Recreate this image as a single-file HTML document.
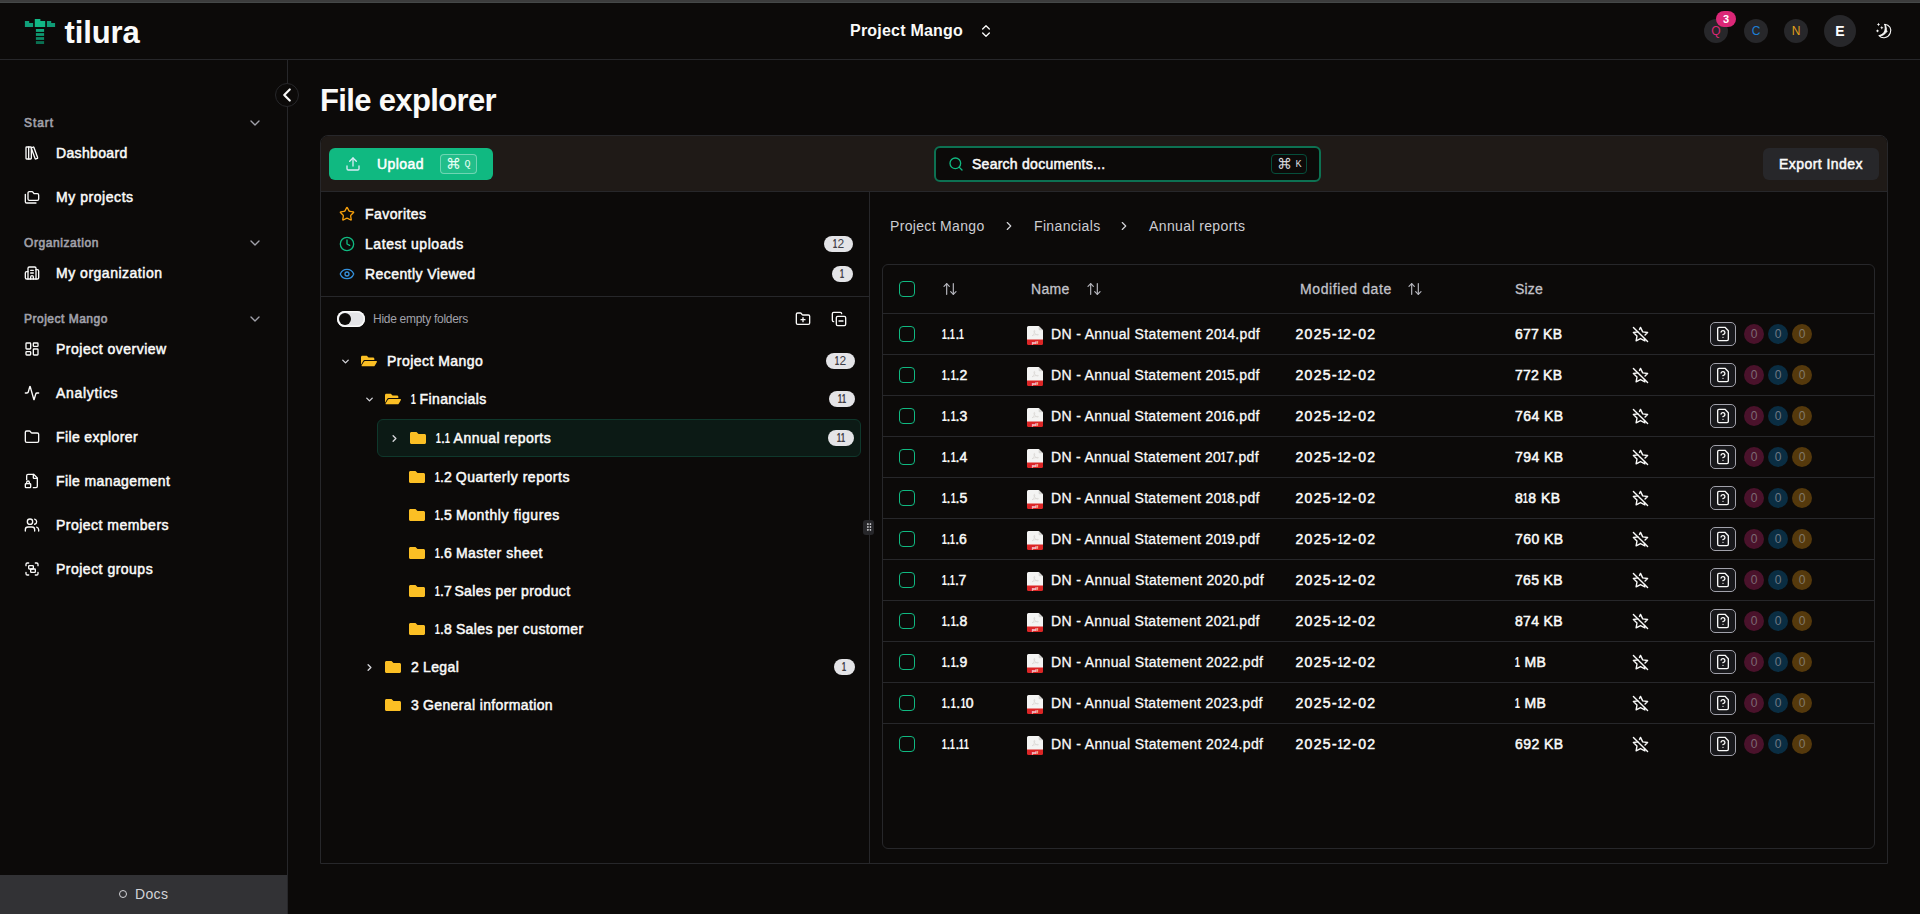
<!DOCTYPE html>
<html lang="en"><head><meta charset="utf-8"><title>File explorer - tilura</title>
<style>
*{box-sizing:border-box;margin:0;padding:0}
html,body{width:1920px;height:914px;overflow:hidden;background:#0c0a09}
body{position:relative;font-family:"Liberation Sans",sans-serif;color:#fafaf9;font-size:14px;line-height:20px;-webkit-font-smoothing:antialiased}
svg{display:block}
.abs{position:absolute}
#topbar{position:absolute;left:0;top:0;width:1920px;height:3px;background:#3c3c3c;border-bottom:1px solid #454848}
#header{position:absolute;left:0;top:3px;width:1920px;height:57px;border-bottom:1px solid #27272a}
#logo{position:absolute;left:24px;top:15px}
#brand{position:absolute;left:64.500px;top:12px;font-size:31px;line-height:36px;font-weight:700;letter-spacing:-0.2px;color:#fafaf9}
#proj{position:absolute;left:850px;top:18px;font-size:16px;line-height:20px;font-weight:700;white-space:nowrap}
#projchev{position:absolute;left:978px;top:20px;color:#fafaf9}
.av{position:absolute;border-radius:50%;background:#27272a;text-align:center;font-size:12px}
#avq{left:1704px;top:16px;width:24px;height:24px;line-height:24px;color:#db2777}
#avc{left:1744px;top:16px;width:24px;height:24px;line-height:24px;color:#1d7fd6}
#avn{left:1784px;top:16px;width:24px;height:24px;line-height:24px;color:#e0a11b}
#ave{left:1824px;top:12px;width:32px;height:32px;line-height:32px;color:#fff;font-weight:700;font-size:14px}
#avbadge{position:absolute;left:1716px;top:8px;width:20px;height:16px;border-radius:8px;background:#db2777;color:#fff;font-size:11px;line-height:16px;font-weight:700;text-align:center}
#moon{position:absolute;left:1868px;top:13px}
#sidebar{position:absolute;left:0;top:60px;width:288px;height:854px;border-right:1px solid #27272a}
#collapse{position:absolute;left:275px;top:83px;width:24px;height:24px;border-radius:50%;border:1px solid #27272a;background:#0c0a09;color:#fafaf9}
#collapse svg{position:absolute;left:0;top:0}
.nlabel{position:absolute;left:24px;font-size:12px;line-height:18px;font-weight:400;-webkit-text-stroke:0.600px;color:#a1a1aa;white-space:nowrap}
.nchev{position:absolute;left:247px;color:#a1a1aa}
.nitem{position:absolute;left:24px;height:20px;white-space:nowrap}
.nic{position:absolute;left:0;top:2px;color:#fafaf9}
.ntx{position:absolute;left:32px;top:0;font-weight:400;-webkit-text-stroke:0.500px;font-size:14px;line-height:20px}
#docs{position:absolute;left:0;top:815px;width:287px;height:39px;background:#323235;color:#d4d4d8;font-size:14px;line-height:39px}
#docs i{position:absolute;left:119px;top:15px;width:8px;height:8px;border:1px solid #d4d4d8;border-radius:50%}
#docs>span{position:absolute;left:135px;top:0}
#title{position:absolute;left:320px;top:83px;font-size:31px;line-height:36px;font-weight:700;letter-spacing:-0.6px;white-space:nowrap}
#panel{position:absolute;left:320px;top:135px;width:1568px;height:729px;border:1px solid #27272a;border-radius:8px 8px 0 0;overflow:hidden}
#toolbar{position:absolute;left:0;top:0;width:1566px;height:56px;background:#1f1a17;border-bottom:1px solid #27272a}
#upload{position:absolute;left:8px;top:12px;width:164px;height:32px;border-radius:6px;background:#10b981;color:#fff}
#upload .ut{-webkit-text-stroke:0.500px}
#upload .ui{position:absolute;left:16px;top:8px;color:#d9ecf6}
#upload .ut{position:absolute;left:48px;top:6px}
.kbd{position:absolute;border-radius:4px;font-family:"Liberation Mono",monospace;font-size:10px;white-space:nowrap}
#upload .kbd{left:111px;top:6px;width:37px;height:20px;border:1px solid rgba(255,255,255,.35);color:#e7fff5;background:rgba(255,255,255,.08)}
#search{position:absolute;left:613px;top:10px;width:387px;height:36px;border:2px solid #0d7152;border-radius:6px;background:#0c0a09}
#search .si{position:absolute;left:12px;top:8px;color:#10b981}
#search .st{position:absolute;left:36px;top:6px;-webkit-text-stroke:0.500px;white-space:nowrap}
#search .kbd{left:335px;top:6px;width:36px;height:20px;border:1px solid #064e3b;color:#d4d4d8}
.kbd .cmd{position:absolute;left:5px;top:0;font-family:"DejaVu Sans",sans-serif;font-size:15px;line-height:18px}
.kbd .key{position:absolute;left:23.500px;top:2px;font-size:10px;line-height:15px}
#export{position:absolute;left:1442px;top:12px;width:116px;height:32px;border-radius:6px;background:#27272a;-webkit-text-stroke:0.500px;text-align:center;line-height:32px;white-space:nowrap}
#left{position:absolute;left:0;top:56px;width:549px;height:672px;border-right:1px solid #27272a}
.frow{position:absolute;left:0;width:548px;height:20px}
.frow .fi{position:absolute;left:18px;top:2px}
.frow .ft{position:absolute;left:44px;top:0;-webkit-text-stroke:0.500px;white-space:nowrap}
.badge{position:absolute;height:16px;border-radius:8px;background:#e4e4e7;color:#3f3f46;font-size:12px;line-height:16px;text-align:center;padding:0;letter-spacing:-0.5px}
#sep1{position:absolute;left:0;top:104px;width:548px;height:1px;background:#27272a}
#toggle{position:absolute;left:16px;top:119px;width:28px;height:16px;border-radius:8px;background:#e4e4e7;box-shadow:inset 0 0 0 1.500px #fafafa}
#toggle i{position:absolute;left:2px;top:2px;width:12px;height:12px;border-radius:50%;background:#0c0a09}
#hidetx{position:absolute;left:52px;top:118px;font-size:12px;line-height:18px;color:#a1a1aa;white-space:nowrap;letter-spacing:-0.45px}
#fplus{position:absolute;left:474px;top:119px;color:#fafaf9}
#cminus{position:absolute;left:510px;top:119px;color:#fafaf9}
#tree{position:absolute;left:0;top:-192px;width:548px}
#tree>span{position:absolute}
.tchev{color:#d4d4d8}
.o{font-style:normal;font-weight:700;text-indent:-.03em;-webkit-text-stroke:0;display:inline-block;width:.364em;transform:scaleX(.66);transform-origin:0 0}
.ttx{-webkit-text-stroke:0.500px;white-space:nowrap;line-height:20px}
.tsel{position:absolute;left:56px;width:484px;height:38px;border:1px solid #0f382c;border-radius:6px;background:#0c1a15}
#grip{position:absolute;left:542px;top:384px;width:11px;height:15px;border-radius:3px;background:#27272a;color:#e4e4e7;z-index:5}
#grip svg{position:absolute;left:0.500px;top:2px}
#right{position:absolute;left:550px;top:56px;width:1016px;height:672px}
#crumbs>span{position:absolute;top:24px;font-size:14px;line-height:20px;color:#cdcdd2;white-space:nowrap}
#crumbs i{position:absolute;top:27px;color:#d4d4d8}
#table{position:absolute;left:11px;top:72px;width:993px;height:585px;border:1px solid #27272a;border-radius:6px;overflow:hidden}
#thead{position:absolute;left:0;top:0;width:991px;height:48px;-webkit-text-stroke:0.300px;color:#c2c2c9}
#thead>span{position:absolute;top:14px;white-space:nowrap}
#thead i{position:absolute;top:16px;color:#b4b4bb}
.cb{position:absolute;left:16px;width:16px;height:16px;border:1.500px solid #10b981;border-radius:4px}
.row{position:absolute;left:0;width:991px;height:41px;border-top:1px solid #27272a}
.row>span{position:absolute;white-space:nowrap}
.row .cb{top:12px}
.c-idx{left:58.500px;top:10px;-webkit-text-stroke:0.500px}
.c-pdf{left:144px;top:12px}
.c-name{left:168px;top:10px;-webkit-text-stroke:0.3px #fafaf9}
.c-date{left:412.500px;top:10px;-webkit-text-stroke:0.500px}
.c-size{left:632px;top:10px;-webkit-text-stroke:0.500px}
.c-star{left:748.500px;top:11.500px;color:#fafaf9}
.c-q{left:827px;top:8px;width:26px;height:24px;border:1px solid #a1a1aa;border-radius:5px;background:#18181b;color:#fafaf9}
.c-q svg{position:absolute;left:4px;top:3px}
.dot{top:10px;width:20px;height:20px;border-radius:50%;font-size:12px;line-height:20px;text-align:center}
.d1{left:861px;background:#4a122b;color:#7d6a73}
.d2{left:885px;background:#0a2d42;color:#6e7882}
.d3{left:909px;background:#55390c;color:#82796a}

</style></head>
<body>
<div id="topbar"></div>
<div id="header">
  <svg id="logo" width="32" height="28" viewBox="0 0 32 28">
    <path d="M.9 2.900h4.300v2.100h3.900v4H.9z" fill="#10a07a"/>
    <path d="M10.800 1.100h5.600v1.800h4.800v6.100H10.800z" fill="#12b886"/>
    <path d="M22.900 2.900h4.300v2.100h3.900v4h-8.200z" fill="#0f9c76"/>
    <rect x="11.900" y="11" width="8.200" height="2.900" fill="#11a87d"/>
    <rect x="11.900" y="15.100" width="8.200" height="2.800" fill="#0f9a72"/>
    <rect x="11.900" y="19.100" width="8.200" height="2.800" fill="#0d8a66"/>
    <rect x="11.900" y="23.100" width="8.200" height="2.900" fill="#0a7052"/>
  </svg>
  <div id="brand"><span style="letter-spacing:-0.09px">tilura</span></div>
  <div id="proj"><span style="letter-spacing:0.22px">Project Mango</span></div>
  <div id="projchev"><svg width="16" height="16" viewBox="0 0 24 24" fill="none" stroke="currentColor" stroke-width="2" stroke-linecap="round" stroke-linejoin="round" ><path d="m7 15 5 5 5-5"/><path d="m7 9 5-5 5 5"/></svg></div>
  <div class="av" id="avq">Q</div><div id="avbadge">3</div>
  <div class="av" id="avc">C</div>
  <div class="av" id="avn">N</div>
  <div class="av" id="ave">E</div>
  <svg id="moon" width="32" height="30" viewBox="0 0 32 30"><path d="M16.700 8.200C21.500 8.700 24.100 13 22.200 17.300 20.300 21.800 14.500 23.300 11 19.600" fill="none" stroke="#fafaf9" stroke-width="1.100" stroke-linecap="round"/><path d="M16.700 8.200C18.300 10.700 18.600 12.600 18.200 14.200L19.300 15.300 18 16.300C16.800 18.600 13.800 20.100 11 19.600 14 19 16.300 17 16.900 14.300 17.400 12 17.200 10 16.700 8.200Z" fill="#fafaf9" stroke="#fafaf9" stroke-width=".9" stroke-linejoin="round"/><path d="M10.500 6.800l.55 1.150 1.150.55-1.150.55-.55 1.150-.55-1.150-1.150-.55 1.150-.55z" fill="#fafaf9"/><path d="M13.800 10l.55 1.150 1.150.55-1.150.55-.55 1.150-.55-1.150-1.150-.55 1.150-.55z" fill="#fafaf9"/><path d="M9.500 13.200l.55 1.150 1.150.55-1.150.55-.55 1.150-.55-1.150-1.150-.55 1.150-.55z" fill="#fafaf9"/></svg>
</div>
<div id="sidebar">
  <div style="position:absolute;left:0;top:-60px">
<div class="nlabel" style="top:114px"><span style="letter-spacing:0.95px">Start</span></div><div class="nchev" style="top:115px"><svg width="16" height="16" viewBox="0 0 24 24" fill="none" stroke="currentColor" stroke-width="2" stroke-linecap="round" stroke-linejoin="round" ><path d="m6 9 6 6 6-6"/></svg></div>
<div class="nitem" style="top:143px"><span class="nic"><svg width="16" height="16" viewBox="0 0 24 24" fill="none" stroke="currentColor" stroke-width="2" stroke-linecap="round" stroke-linejoin="round" ><rect width="8" height="18" x="3" y="3" rx="1"/><path d="M7 3v18"/><path d="M20.4 18.9c.2.5-.1 1.1-.6 1.3l-1.9.7c-.5.2-1.1-.1-1.3-.6L11.1 5.1c-.2-.5.1-1.1.6-1.3l1.9-.7c.5-.2 1.1.1 1.3.6Z"/></svg></span><span class="ntx"><span style="letter-spacing:0.34px">Dashboard</span></span></div>
<div class="nitem" style="top:187px"><span class="nic"><svg width="16" height="16" viewBox="0 0 24 24" fill="none" stroke="currentColor" stroke-width="2" stroke-linecap="round" stroke-linejoin="round" ><path d="M20 17a2 2 0 0 0 2-2V9a2 2 0 0 0-2-2h-3.9a2 2 0 0 1-1.69-.9l-.81-1.2a2 2 0 0 0-1.67-.9H8a2 2 0 0 0-2 2v9a2 2 0 0 0 2 2Z"/><path d="M2 8v11a2 2 0 0 0 2 2h14"/></svg></span><span class="ntx"><span style="letter-spacing:0.55px">My projects</span></span></div>
<div class="nlabel" style="top:234px"><span style="letter-spacing:0.58px">Organization</span></div><div class="nchev" style="top:235px"><svg width="16" height="16" viewBox="0 0 24 24" fill="none" stroke="currentColor" stroke-width="2" stroke-linecap="round" stroke-linejoin="round" ><path d="m6 9 6 6 6-6"/></svg></div>
<div class="nitem" style="top:263px"><span class="nic"><svg width="16" height="16" viewBox="0 0 24 24" fill="none" stroke="currentColor" stroke-width="2" stroke-linecap="round" stroke-linejoin="round" ><path d="M10 12h4"/><path d="M10 8h4"/><path d="M14 21v-3a2 2 0 0 0-4 0v3"/><path d="M6 10H4a2 2 0 0 0-2 2v7a2 2 0 0 0 2 2h16a2 2 0 0 0 2-2V9a2 2 0 0 0-2-2h-2"/><path d="M6 21V5a2 2 0 0 1 2-2h8a2 2 0 0 1 2 2v16"/></svg></span><span class="ntx"><span style="letter-spacing:0.51px">My organization</span></span></div>
<div class="nlabel" style="top:310px"><span style="letter-spacing:0.5px">Project Mango</span></div><div class="nchev" style="top:311px"><svg width="16" height="16" viewBox="0 0 24 24" fill="none" stroke="currentColor" stroke-width="2" stroke-linecap="round" stroke-linejoin="round" ><path d="m6 9 6 6 6-6"/></svg></div>
<div class="nitem" style="top:339px"><span class="nic"><svg width="16" height="16" viewBox="0 0 24 24" fill="none" stroke="currentColor" stroke-width="2" stroke-linecap="round" stroke-linejoin="round" ><rect width="7" height="9" x="3" y="3" rx="1"/><rect width="7" height="5" x="14" y="3" rx="1"/><rect width="7" height="9" x="14" y="12" rx="1"/><rect width="7" height="5" x="3" y="16" rx="1"/></svg></span><span class="ntx"><span style="letter-spacing:0.5px">Project overview</span></span></div>
<div class="nitem" style="top:383px"><span class="nic"><svg width="16" height="16" viewBox="0 0 24 24" fill="none" stroke="currentColor" stroke-width="2" stroke-linecap="round" stroke-linejoin="round" ><path d="M22 12h-2.48a2 2 0 0 0-1.93 1.46l-2.35 8.36a.25.25 0 0 1-.48 0L9.24 2.18a.25.25 0 0 0-.48 0l-2.35 8.36A2 2 0 0 1 4.49 12H2"/></svg></span><span class="ntx"><span style="letter-spacing:0.7px">Analytics</span></span></div>
<div class="nitem" style="top:427px"><span class="nic"><svg width="16" height="16" viewBox="0 0 24 24" fill="none" stroke="currentColor" stroke-width="2" stroke-linecap="round" stroke-linejoin="round" ><path d="M20 20a2 2 0 0 0 2-2V8a2 2 0 0 0-2-2h-7.9a2 2 0 0 1-1.69-.9L9.6 3.9A2 2 0 0 0 7.93 3H4a2 2 0 0 0-2 2v13a2 2 0 0 0 2 2Z"/></svg></span><span class="ntx"><span style="letter-spacing:0.38px">File explorer</span></span></div>
<div class="nitem" style="top:471px"><span class="nic"><svg width="16" height="16" viewBox="0 0 24 24" fill="none" stroke="currentColor" stroke-width="2" stroke-linecap="round" stroke-linejoin="round" ><path d="M4 10V4a2 2 0 0 1 2-2h8.5L20 7.5V20a2 2 0 0 1-2 2h-4"/><path d="M14 2v5a1 1 0 0 0 1 1h5"/><rect width="8" height="6" x="2" y="16" rx="1"/><path d="M8 16v-2a2 2 0 1 0-4 0v2"/></svg></span><span class="ntx"><span style="letter-spacing:0.4px">File management</span></span></div>
<div class="nitem" style="top:515px"><span class="nic"><svg width="16" height="16" viewBox="0 0 24 24" fill="none" stroke="currentColor" stroke-width="2" stroke-linecap="round" stroke-linejoin="round" ><path d="M16 21v-2a4 4 0 0 0-4-4H6a4 4 0 0 0-4 4v2"/><circle cx="9" cy="7" r="4"/><path d="M22 21v-2a4 4 0 0 0-3-3.87"/><path d="M16 3.13a4 4 0 0 1 0 7.75"/></svg></span><span class="ntx"><span style="letter-spacing:0.48px">Project members</span></span></div>
<div class="nitem" style="top:559px"><span class="nic"><svg width="16" height="16" viewBox="0 0 24 24" fill="none" stroke="currentColor" stroke-width="2" stroke-linecap="round" stroke-linejoin="round" ><path d="M3 7V5c0-1.1.9-2 2-2h2"/><path d="M17 3h2c1.100 0 2 .9 2 2v2"/><path d="M21 17v2c0 1.100-.9 2-2 2h-2"/><path d="M7 21H5c-1.100 0-2-.9-2-2v-2"/><rect width="7" height="5" x="7" y="7" rx="1"/><rect width="7" height="5" x="10" y="12" rx="1"/></svg></span><span class="ntx"><span style="letter-spacing:0.49px">Project groups</span></span></div>
  </div>
  <div id="docs"><i></i><span><span style="letter-spacing:0.36px">Docs</span></span></div>
</div>
<div id="collapse"><svg width="22" height="22" viewBox="0 0 24 24" fill="none" stroke="currentColor" stroke-width="2.400" stroke-linecap="round" stroke-linejoin="round" ><path d="m15 18-6-6 6-6"/></svg></div>
<h1 id="title"><span style="letter-spacing:-0.65px">File explorer</span></h1>
<div id="panel">
  <div id="toolbar">
    <div id="upload"><span class="ui"><svg width="16" height="16" viewBox="0 0 24 24" fill="none" stroke="currentColor" stroke-width="2" stroke-linecap="round" stroke-linejoin="round" ><path d="M21 15v4a2 2 0 0 1-2 2H5a2 2 0 0 1-2-2v-4"/><path d="m17 8-5-5-5 5"/><path d="M12 3v12"/></svg></span><span class="ut"><span style="letter-spacing:0.43px">Upload</span></span><span class="kbd"><span class="cmd">&#8984;</span><span class="key">Q</span></span></div>
    <div id="search"><span class="si"><svg width="16" height="16" viewBox="0 0 24 24" fill="none" stroke="currentColor" stroke-width="2" stroke-linecap="round" stroke-linejoin="round" ><circle cx="11" cy="11" r="8"/><path d="m21 21-4.300-4.300"/></svg></span><span class="st"><span style="letter-spacing:0.26px">Search documents...</span></span><span class="kbd"><span class="cmd">&#8984;</span><span class="key">K</span></span></div>
    <div id="export"><span style="letter-spacing:0.45px">Export Index</span></div>
  </div>
  <div id="left">
    <div class="frow" style="top:12px"><span class="fi" style="color:#f59e0b"><svg width="16" height="16" viewBox="0 0 24 24" fill="none" stroke="currentColor" stroke-width="2" stroke-linecap="round" stroke-linejoin="round" ><path d="M11.525 2.295a.53.53 0 0 1 .95 0l2.310 4.679a2.123 2.123 0 0 0 1.595 1.160l5.166.756a.53.53 0 0 1 .294.904l-3.736 3.638a2.123 2.123 0 0 0-.611 1.878l.882 5.140a.53.53 0 0 1-.771.560l-4.618-2.428a2.122 2.122 0 0 0-1.973 0L6.396 21.010a.53.53 0 0 1-.770-.560l.881-5.139a2.122 2.122 0 0 0-.611-1.879L2.160 9.795a.53.53 0 0 1 .294-.906l5.165-.755a2.122 2.122 0 0 0 1.597-1.160z"/></svg></span><span class="ft"><span style="letter-spacing:0.43px">Favorites</span></span></div>
    <div class="frow" style="top:42px"><span class="fi" style="color:#10b981"><svg width="16" height="16" viewBox="0 0 24 24" fill="none" stroke="currentColor" stroke-width="2" stroke-linecap="round" stroke-linejoin="round" ><circle cx="12" cy="12" r="10"/><path d="M12 6v6l4 2"/></svg></span><span class="ft"><span style="letter-spacing:0.56px">Latest uploads</span></span><span class="badge" style="right:16px;top:2px;width:29px"><i class="o">1</i>2</span></div>
    <div class="frow" style="top:72px"><span class="fi" style="color:#3490dc"><svg width="16" height="16" viewBox="0 0 24 24" fill="none" stroke="currentColor" stroke-width="2" stroke-linecap="round" stroke-linejoin="round" ><path d="M2.062 12.348a1 1 0 0 1 0-.696 10.750 10.750 0 0 1 19.876 0 1 1 0 0 1 0 .696 10.750 10.750 0 0 1-19.876 0"/><circle cx="12" cy="12" r="3"/></svg></span><span class="ft"><span style="letter-spacing:0.43px">Recently Viewed</span></span><span class="badge" style="right:16px;top:2px;width:21px"><i class="o">1</i></span></div>
    <div id="sep1"></div>
    <div id="toggle"><i></i></div>
    <div id="hidetx"><span style="letter-spacing:-0.28px">Hide empty folders</span></div>
    <div id="fplus"><svg width="16" height="16" viewBox="0 0 24 24" fill="none" stroke="currentColor" stroke-width="2" stroke-linecap="round" stroke-linejoin="round" ><path d="M12 10v6"/><path d="M9 13h6"/><path d="M20 20a2 2 0 0 0 2-2V8a2 2 0 0 0-2-2h-7.900a2 2 0 0 1-1.690-.9L9.600 3.900A2 2 0 0 0 7.930 3H4a2 2 0 0 0-2 2v13a2 2 0 0 0 2 2Z"/></svg></div>
    <div id="cminus"><svg width="16" height="16" viewBox="0 0 24 24" fill="none" stroke="currentColor" stroke-width="2" stroke-linecap="round" stroke-linejoin="round" ><line x1="12" x2="18" y1="15" y2="15"/><rect width="14" height="14" x="8" y="8" rx="2" ry="2"/><path d="M4 16c-1.100 0-2-.9-2-2V4c0-1.100.9-2 2-2h10c1.100 0 2 .9 2 2"/></svg></div>
    <div id="tree">
<span class="tchev" style="left:18.5px;top:355.5px"><svg width="11" height="11" viewBox="0 0 24 24" fill="none" stroke="currentColor" stroke-width="3" stroke-linecap="round" stroke-linejoin="round" ><path d="m6 9 6 6 6-6"/></svg></span><span class="tfold" style="left:40px;top:353px"><svg class="fold" width="16" height="16" viewBox="0 0 576 512"><path d="M572.694 292.093L500.270 416.248A63.997 63.997 0 0 1 444.989 448H45.025c-18.523 0-30.064-20.093-20.731-36.093l72.424-124.155A64 64 0 0 1 152 256h399.964c18.523 0 30.064 20.093 20.730 36.093zM152 224h328v-48c0-26.510-21.490-48-48-48H272l-64-64H48C21.490 64 0 85.490 0 112v278.046l69.077-118.418C86.214 242.250 117.989 224 152 224z" fill="#fbbf24"/></svg></span><span class="ttx" style="left:66px;top:351px"><span style="letter-spacing:0.47px">Project Mango</span></span><span class="badge" style="right:14px;top:353px;width:29px"><i class="o">1</i>2</span>
<span class="tchev" style="left:42.5px;top:393.5px"><svg width="11" height="11" viewBox="0 0 24 24" fill="none" stroke="currentColor" stroke-width="3" stroke-linecap="round" stroke-linejoin="round" ><path d="m6 9 6 6 6-6"/></svg></span><span class="tfold" style="left:64px;top:391px"><svg class="fold" width="16" height="16" viewBox="0 0 576 512"><path d="M572.694 292.093L500.270 416.248A63.997 63.997 0 0 1 444.989 448H45.025c-18.523 0-30.064-20.093-20.731-36.093l72.424-124.155A64 64 0 0 1 152 256h399.964c18.523 0 30.064 20.093 20.730 36.093zM152 224h328v-48c0-26.510-21.490-48-48-48H272l-64-64H48C21.490 64 0 85.490 0 112v278.046l69.077-118.418C86.214 242.250 117.989 224 152 224z" fill="#fbbf24"/></svg></span><span class="ttx tpre" style="left:90px;top:389px"><i class="o">1</i></span><span class="ttx" style="left:98.5px;top:389px"><span style="letter-spacing:0.41px">Financials</span></span><span class="badge" style="right:14px;top:391px;width:26px"><i class="o">1</i><i class="o">1</i></span>
<div class="tsel" style="top:419px"></div><span class="tchev" style="left:67.5px;top:432.5px"><svg width="11" height="11" viewBox="0 0 24 24" fill="none" stroke="currentColor" stroke-width="3" stroke-linecap="round" stroke-linejoin="round" ><path d="m9 18 6-6-6-6"/></svg></span><span class="tfold" style="left:89px;top:430px"><svg class="fold" width="16" height="16" viewBox="0 0 512 512"><path d="M464 128H272l-64-64H48C21.490 64 0 85.490 0 112v288c0 26.510 21.490 48 48 48h416c26.510 0 48-21.490 48-48V176c0-26.510-21.490-48-48-48z" fill="#fbbf24"/></svg></span><span class="ttx tpre" style="left:115px;top:428px"><i class="o">1</i>.<i class="o">1</i></span><span class="ttx" style="left:132.6px;top:428px"><span style="letter-spacing:0.46px">Annual reports</span></span><span class="badge" style="right:15px;top:430px;width:26px"><i class="o">1</i><i class="o">1</i></span>
<span class="tfold" style="left:88px;top:469px"><svg class="fold" width="16" height="16" viewBox="0 0 512 512"><path d="M464 128H272l-64-64H48C21.490 64 0 85.490 0 112v288c0 26.510 21.490 48 48 48h416c26.510 0 48-21.490 48-48V176c0-26.510-21.490-48-48-48z" fill="#fbbf24"/></svg></span><span class="ttx tpre" style="left:114px;top:467px"><i class="o">1</i>.2</span><span class="ttx" style="left:134.7px;top:467px"><span style="letter-spacing:0.55px">Quarterly reports</span></span>
<span class="tfold" style="left:88px;top:507px"><svg class="fold" width="16" height="16" viewBox="0 0 512 512"><path d="M464 128H272l-64-64H48C21.490 64 0 85.490 0 112v288c0 26.510 21.490 48 48 48h416c26.510 0 48-21.490 48-48V176c0-26.510-21.490-48-48-48z" fill="#fbbf24"/></svg></span><span class="ttx tpre" style="left:114px;top:505px"><i class="o">1</i>.5</span><span class="ttx" style="left:134.9px;top:505px"><span style="letter-spacing:0.61px">Monthly figures</span></span>
<span class="tfold" style="left:88px;top:545px"><svg class="fold" width="16" height="16" viewBox="0 0 512 512"><path d="M464 128H272l-64-64H48C21.490 64 0 85.490 0 112v288c0 26.510 21.490 48 48 48h416c26.510 0 48-21.490 48-48V176c0-26.510-21.490-48-48-48z" fill="#fbbf24"/></svg></span><span class="ttx tpre" style="left:114px;top:543px"><i class="o">1</i>.6</span><span class="ttx" style="left:134.9px;top:543px"><span style="letter-spacing:0.51px">Master sheet</span></span>
<span class="tfold" style="left:88px;top:583px"><svg class="fold" width="16" height="16" viewBox="0 0 512 512"><path d="M464 128H272l-64-64H48C21.490 64 0 85.490 0 112v288c0 26.510 21.490 48 48 48h416c26.510 0 48-21.490 48-48V176c0-26.510-21.490-48-48-48z" fill="#fbbf24"/></svg></span><span class="ttx tpre" style="left:114px;top:581px"><i class="o">1</i>.7</span><span class="ttx" style="left:133.4px;top:581px"><span style="letter-spacing:0.37px">Sales per product</span></span>
<span class="tfold" style="left:88px;top:621px"><svg class="fold" width="16" height="16" viewBox="0 0 512 512"><path d="M464 128H272l-64-64H48C21.490 64 0 85.490 0 112v288c0 26.510 21.490 48 48 48h416c26.510 0 48-21.490 48-48V176c0-26.510-21.490-48-48-48z" fill="#fbbf24"/></svg></span><span class="ttx tpre" style="left:114px;top:619px"><i class="o">1</i>.8</span><span class="ttx" style="left:134.9px;top:619px"><span style="letter-spacing:0.39px">Sales per customer</span></span>
<span class="tchev" style="left:42.5px;top:661.5px"><svg width="11" height="11" viewBox="0 0 24 24" fill="none" stroke="currentColor" stroke-width="3" stroke-linecap="round" stroke-linejoin="round" ><path d="m9 18 6-6-6-6"/></svg></span><span class="tfold" style="left:64px;top:659px"><svg class="fold" width="16" height="16" viewBox="0 0 512 512"><path d="M464 128H272l-64-64H48C21.490 64 0 85.490 0 112v288c0 26.510 21.490 48 48 48h416c26.510 0 48-21.490 48-48V176c0-26.510-21.490-48-48-48z" fill="#fbbf24"/></svg></span><span class="ttx tpre" style="left:90px;top:657px">2</span><span class="ttx" style="left:102.0px;top:657px"><span style="letter-spacing:0.38px">Legal</span></span><span class="badge" style="right:14px;top:659px;width:21px"><i class="o">1</i></span>
<span class="tfold" style="left:64px;top:697px"><svg class="fold" width="16" height="16" viewBox="0 0 512 512"><path d="M464 128H272l-64-64H48C21.490 64 0 85.490 0 112v288c0 26.510 21.490 48 48 48h416c26.510 0 48-21.490 48-48V176c0-26.510-21.490-48-48-48z" fill="#fbbf24"/></svg></span><span class="ttx tpre" style="left:90px;top:695px">3</span><span class="ttx" style="left:102.0px;top:695px"><span style="letter-spacing:0.37px">General information</span></span>
    </div>
  </div>
  <div id="grip"><svg width="10" height="10" viewBox="0 0 24 24" fill="none" stroke="currentColor" stroke-width="2" stroke-linecap="round" stroke-linejoin="round" ><circle cx="9" cy="12" r="1"/><circle cx="9" cy="5" r="1"/><circle cx="9" cy="19" r="1"/><circle cx="15" cy="12" r="1"/><circle cx="15" cy="5" r="1"/><circle cx="15" cy="19" r="1"/></svg></div>
  <div id="right">
    <div id="crumbs">
      <span style="left:19px"><span style="letter-spacing:0.33px">Project Mango</span></span><i style="left:131px"><svg width="14" height="14" viewBox="0 0 24 24" fill="none" stroke="currentColor" stroke-width="2" stroke-linecap="round" stroke-linejoin="round" ><path d="m9 18 6-6-6-6"/></svg></i>
      <span style="left:163px"><span style="letter-spacing:0.35px">Financials</span></span><i style="left:246px"><svg width="14" height="14" viewBox="0 0 24 24" fill="none" stroke="currentColor" stroke-width="2" stroke-linecap="round" stroke-linejoin="round" ><path d="m9 18 6-6-6-6"/></svg></i>
      <span style="left:278px"><span style="letter-spacing:0.38px">Annual reports</span></span>
    </div>
    <div id="table">
      <div id="thead">
        <span class="cb" style="top:16px"></span>
        <i style="left:59px"><svg width="16" height="16" viewBox="0 0 24 24" fill="none" stroke="currentColor" stroke-width="1.800" stroke-linecap="round" stroke-linejoin="round" ><path d="m21 16-4 4-4-4"/><path d="M17 20V4"/><path d="m3 8 4-4 4 4"/><path d="M7 4v16"/></svg></i>
        <span style="left:148px"><span style="letter-spacing:0.32px">Name</span></span><i style="left:203px"><svg width="16" height="16" viewBox="0 0 24 24" fill="none" stroke="currentColor" stroke-width="1.800" stroke-linecap="round" stroke-linejoin="round" ><path d="m21 16-4 4-4-4"/><path d="M17 20V4"/><path d="m3 8 4-4 4 4"/><path d="M7 4v16"/></svg></i>
        <span style="left:417px"><span style="letter-spacing:0.6px">Modified date</span></span><i style="left:524px"><svg width="16" height="16" viewBox="0 0 24 24" fill="none" stroke="currentColor" stroke-width="1.800" stroke-linecap="round" stroke-linejoin="round" ><path d="m21 16-4 4-4-4"/><path d="M17 20V4"/><path d="m3 8 4-4 4 4"/><path d="M7 4v16"/></svg></i>
        <span style="left:632px"><span style="letter-spacing:0.2px">Size</span></span>
      </div>
<div class="row" style="top:48px"><span class="cb"></span><span class="c-idx"><span style="letter-spacing:-0.09px"><i class="o">1</i>.<i class="o">1</i>.<i class="o">1</i></span></span><span class="c-pdf"><svg class="pdf" width="16" height="19" viewBox="0 0 16 19"><path d="M0 1.500 a1.500 1.500 0 0 1 1.500-1.500 h10.200 l4.300 4.300 v9.700 h-16z" fill="#f4f4f3"/><path d="M11.700 0 l4.300 4.300 h-3.500 a.8.8 0 0 1-.8-.8z" fill="#d6d5d3"/><path d="M5.200 9.800 c1.800-1.500 2.600-3.400 2.600-4.800 c0-.8-.9-.8-.9 0 c0 1.800 1.700 3.900 3.900 4.100 c.8.100.8-.700 0-.700 c-1.800 0-4.300.600-5.600 1.400z" fill="none" stroke="#d9d6d2" stroke-width=".7"/><path d="M0 13.500 h16 v4 a1.500 1.500 0 0 1-1.500 1.500 h-13 a1.500 1.500 0 0 1-1.500-1.500z" fill="#dc2626"/><text x="8" y="17.600" text-anchor="middle" font-family="Liberation Sans, sans-serif" font-weight="700" font-size="3.800" fill="#fff">pdf</text></svg></span><span class="c-name"><span style="letter-spacing:0.35px">DN - Annual Statement 20<i class="o">1</i>4.pdf</span></span><span class="c-date"><span style="letter-spacing:1.33px">2025-<i class="o">1</i>2-02</span></span><span class="c-size"><span style="letter-spacing:0.21px">677 KB</span></span><span class="c-star"><svg width="17" height="17" viewBox="0 0 24 24" fill="none" stroke="currentColor" stroke-width="2" stroke-linecap="round" stroke-linejoin="round" ><path d="M8.340 8.340 2 9.270l5 4.870L5.820 21 12 17.770 18.180 21l-.590-3.430"/><path d="M18.420 12.760 22 9.270l-6.910-1L12 2l-1.440 2.910"/><line x1="2" x2="22" y1="2" y2="22"/></svg></span><span class="c-q"><svg width="16" height="16" viewBox="0 0 24 24" fill="none" stroke="currentColor" stroke-width="2" stroke-linecap="round" stroke-linejoin="round" ><path d="M12 17h.01"/><path d="M15 2H6a2 2 0 0 0-2 2v16a2 2 0 0 0 2 2h12a2 2 0 0 0 2-2V7z"/><path d="M9.100 9a3 3 0 0 1 5.820 1c0 2-3 3-3 3"/></svg></span><span class="dot d1">0</span><span class="dot d2">0</span><span class="dot d3">0</span></div>
<div class="row" style="top:89px"><span class="cb"></span><span class="c-idx"><span style="letter-spacing:0.02px"><i class="o">1</i>.<i class="o">1</i>.2</span></span><span class="c-pdf"><svg class="pdf" width="16" height="19" viewBox="0 0 16 19"><path d="M0 1.500 a1.500 1.500 0 0 1 1.500-1.500 h10.200 l4.300 4.300 v9.700 h-16z" fill="#f4f4f3"/><path d="M11.700 0 l4.300 4.300 h-3.500 a.8.8 0 0 1-.8-.8z" fill="#d6d5d3"/><path d="M5.200 9.800 c1.800-1.500 2.600-3.400 2.600-4.800 c0-.8-.9-.8-.9 0 c0 1.800 1.700 3.900 3.900 4.100 c.8.100.8-.700 0-.700 c-1.800 0-4.300.600-5.600 1.400z" fill="none" stroke="#d9d6d2" stroke-width=".7"/><path d="M0 13.500 h16 v4 a1.500 1.500 0 0 1-1.500 1.500 h-13 a1.500 1.500 0 0 1-1.500-1.500z" fill="#dc2626"/><text x="8" y="17.600" text-anchor="middle" font-family="Liberation Sans, sans-serif" font-weight="700" font-size="3.800" fill="#fff">pdf</text></svg></span><span class="c-name"><span style="letter-spacing:0.34px">DN - Annual Statement 20<i class="o">1</i>5.pdf</span></span><span class="c-date"><span style="letter-spacing:1.33px">2025-<i class="o">1</i>2-02</span></span><span class="c-size"><span style="letter-spacing:0.21px">772 KB</span></span><span class="c-star"><svg width="17" height="17" viewBox="0 0 24 24" fill="none" stroke="currentColor" stroke-width="2" stroke-linecap="round" stroke-linejoin="round" ><path d="M8.340 8.340 2 9.270l5 4.870L5.820 21 12 17.770 18.180 21l-.590-3.430"/><path d="M18.420 12.760 22 9.270l-6.910-1L12 2l-1.440 2.910"/><line x1="2" x2="22" y1="2" y2="22"/></svg></span><span class="c-q"><svg width="16" height="16" viewBox="0 0 24 24" fill="none" stroke="currentColor" stroke-width="2" stroke-linecap="round" stroke-linejoin="round" ><path d="M12 17h.01"/><path d="M15 2H6a2 2 0 0 0-2 2v16a2 2 0 0 0 2 2h12a2 2 0 0 0 2-2V7z"/><path d="M9.100 9a3 3 0 0 1 5.820 1c0 2-3 3-3 3"/></svg></span><span class="dot d1">0</span><span class="dot d2">0</span><span class="dot d3">0</span></div>
<div class="row" style="top:130px"><span class="cb"></span><span class="c-idx"><span style="letter-spacing:0.02px"><i class="o">1</i>.<i class="o">1</i>.3</span></span><span class="c-pdf"><svg class="pdf" width="16" height="19" viewBox="0 0 16 19"><path d="M0 1.500 a1.500 1.500 0 0 1 1.500-1.500 h10.200 l4.300 4.300 v9.700 h-16z" fill="#f4f4f3"/><path d="M11.700 0 l4.300 4.300 h-3.500 a.8.8 0 0 1-.8-.8z" fill="#d6d5d3"/><path d="M5.200 9.800 c1.800-1.500 2.600-3.400 2.600-4.800 c0-.8-.9-.8-.9 0 c0 1.800 1.700 3.900 3.900 4.100 c.8.100.8-.700 0-.700 c-1.800 0-4.300.600-5.600 1.400z" fill="none" stroke="#d9d6d2" stroke-width=".7"/><path d="M0 13.500 h16 v4 a1.500 1.500 0 0 1-1.500 1.500 h-13 a1.500 1.500 0 0 1-1.500-1.500z" fill="#dc2626"/><text x="8" y="17.600" text-anchor="middle" font-family="Liberation Sans, sans-serif" font-weight="700" font-size="3.800" fill="#fff">pdf</text></svg></span><span class="c-name"><span style="letter-spacing:0.34px">DN - Annual Statement 20<i class="o">1</i>6.pdf</span></span><span class="c-date"><span style="letter-spacing:1.33px">2025-<i class="o">1</i>2-02</span></span><span class="c-size"><span style="letter-spacing:0.43px">764 KB</span></span><span class="c-star"><svg width="17" height="17" viewBox="0 0 24 24" fill="none" stroke="currentColor" stroke-width="2" stroke-linecap="round" stroke-linejoin="round" ><path d="M8.340 8.340 2 9.270l5 4.870L5.820 21 12 17.770 18.180 21l-.590-3.430"/><path d="M18.420 12.760 22 9.270l-6.910-1L12 2l-1.440 2.910"/><line x1="2" x2="22" y1="2" y2="22"/></svg></span><span class="c-q"><svg width="16" height="16" viewBox="0 0 24 24" fill="none" stroke="currentColor" stroke-width="2" stroke-linecap="round" stroke-linejoin="round" ><path d="M12 17h.01"/><path d="M15 2H6a2 2 0 0 0-2 2v16a2 2 0 0 0 2 2h12a2 2 0 0 0 2-2V7z"/><path d="M9.100 9a3 3 0 0 1 5.820 1c0 2-3 3-3 3"/></svg></span><span class="dot d1">0</span><span class="dot d2">0</span><span class="dot d3">0</span></div>
<div class="row" style="top:171px"><span class="cb"></span><span class="c-idx"><span style="letter-spacing:0.02px"><i class="o">1</i>.<i class="o">1</i>.4</span></span><span class="c-pdf"><svg class="pdf" width="16" height="19" viewBox="0 0 16 19"><path d="M0 1.500 a1.500 1.500 0 0 1 1.500-1.500 h10.200 l4.300 4.300 v9.700 h-16z" fill="#f4f4f3"/><path d="M11.700 0 l4.300 4.300 h-3.500 a.8.8 0 0 1-.8-.8z" fill="#d6d5d3"/><path d="M5.200 9.800 c1.800-1.500 2.600-3.400 2.600-4.800 c0-.8-.9-.8-.9 0 c0 1.800 1.700 3.900 3.900 4.100 c.8.100.8-.700 0-.700 c-1.800 0-4.300.600-5.600 1.400z" fill="none" stroke="#d9d6d2" stroke-width=".7"/><path d="M0 13.500 h16 v4 a1.500 1.500 0 0 1-1.500 1.500 h-13 a1.500 1.500 0 0 1-1.500-1.500z" fill="#dc2626"/><text x="8" y="17.600" text-anchor="middle" font-family="Liberation Sans, sans-serif" font-weight="700" font-size="3.800" fill="#fff">pdf</text></svg></span><span class="c-name"><span style="letter-spacing:0.31px">DN - Annual Statement 20<i class="o">1</i>7.pdf</span></span><span class="c-date"><span style="letter-spacing:1.33px">2025-<i class="o">1</i>2-02</span></span><span class="c-size"><span style="letter-spacing:0.43px">794 KB</span></span><span class="c-star"><svg width="17" height="17" viewBox="0 0 24 24" fill="none" stroke="currentColor" stroke-width="2" stroke-linecap="round" stroke-linejoin="round" ><path d="M8.340 8.340 2 9.270l5 4.870L5.820 21 12 17.770 18.180 21l-.590-3.430"/><path d="M18.420 12.760 22 9.270l-6.910-1L12 2l-1.440 2.910"/><line x1="2" x2="22" y1="2" y2="22"/></svg></span><span class="c-q"><svg width="16" height="16" viewBox="0 0 24 24" fill="none" stroke="currentColor" stroke-width="2" stroke-linecap="round" stroke-linejoin="round" ><path d="M12 17h.01"/><path d="M15 2H6a2 2 0 0 0-2 2v16a2 2 0 0 0 2 2h12a2 2 0 0 0 2-2V7z"/><path d="M9.100 9a3 3 0 0 1 5.820 1c0 2-3 3-3 3"/></svg></span><span class="dot d1">0</span><span class="dot d2">0</span><span class="dot d3">0</span></div>
<div class="row" style="top:212px"><span class="cb"></span><span class="c-idx"><span style="letter-spacing:0.02px"><i class="o">1</i>.<i class="o">1</i>.5</span></span><span class="c-pdf"><svg class="pdf" width="16" height="19" viewBox="0 0 16 19"><path d="M0 1.500 a1.500 1.500 0 0 1 1.500-1.500 h10.200 l4.300 4.300 v9.700 h-16z" fill="#f4f4f3"/><path d="M11.700 0 l4.300 4.300 h-3.500 a.8.8 0 0 1-.8-.8z" fill="#d6d5d3"/><path d="M5.200 9.800 c1.800-1.500 2.600-3.400 2.600-4.800 c0-.8-.9-.8-.9 0 c0 1.800 1.700 3.900 3.900 4.100 c.8.100.8-.700 0-.700 c-1.800 0-4.300.600-5.600 1.400z" fill="none" stroke="#d9d6d2" stroke-width=".7"/><path d="M0 13.500 h16 v4 a1.500 1.500 0 0 1-1.500 1.500 h-13 a1.500 1.500 0 0 1-1.500-1.500z" fill="#dc2626"/><text x="8" y="17.600" text-anchor="middle" font-family="Liberation Sans, sans-serif" font-weight="700" font-size="3.800" fill="#fff">pdf</text></svg></span><span class="c-name"><span style="letter-spacing:0.34px">DN - Annual Statement 20<i class="o">1</i>8.pdf</span></span><span class="c-date"><span style="letter-spacing:1.33px">2025-<i class="o">1</i>2-02</span></span><span class="c-size"><span style="letter-spacing:0.46px">8<i class="o">1</i>8 KB</span></span><span class="c-star"><svg width="17" height="17" viewBox="0 0 24 24" fill="none" stroke="currentColor" stroke-width="2" stroke-linecap="round" stroke-linejoin="round" ><path d="M8.340 8.340 2 9.270l5 4.870L5.820 21 12 17.770 18.180 21l-.590-3.430"/><path d="M18.420 12.760 22 9.270l-6.910-1L12 2l-1.440 2.910"/><line x1="2" x2="22" y1="2" y2="22"/></svg></span><span class="c-q"><svg width="16" height="16" viewBox="0 0 24 24" fill="none" stroke="currentColor" stroke-width="2" stroke-linecap="round" stroke-linejoin="round" ><path d="M12 17h.01"/><path d="M15 2H6a2 2 0 0 0-2 2v16a2 2 0 0 0 2 2h12a2 2 0 0 0 2-2V7z"/><path d="M9.100 9a3 3 0 0 1 5.820 1c0 2-3 3-3 3"/></svg></span><span class="dot d1">0</span><span class="dot d2">0</span><span class="dot d3">0</span></div>
<div class="row" style="top:253px"><span class="cb"></span><span class="c-idx"><span style="letter-spacing:-0.22px"><i class="o">1</i>.<i class="o">1</i>.6</span></span><span class="c-pdf"><svg class="pdf" width="16" height="19" viewBox="0 0 16 19"><path d="M0 1.500 a1.500 1.500 0 0 1 1.500-1.500 h10.200 l4.300 4.300 v9.700 h-16z" fill="#f4f4f3"/><path d="M11.700 0 l4.300 4.300 h-3.500 a.8.8 0 0 1-.8-.8z" fill="#d6d5d3"/><path d="M5.200 9.800 c1.800-1.500 2.600-3.400 2.600-4.800 c0-.8-.9-.8-.9 0 c0 1.800 1.700 3.900 3.900 4.100 c.8.100.8-.700 0-.700 c-1.800 0-4.300.600-5.600 1.400z" fill="none" stroke="#d9d6d2" stroke-width=".7"/><path d="M0 13.500 h16 v4 a1.500 1.500 0 0 1-1.500 1.500 h-13 a1.500 1.500 0 0 1-1.500-1.500z" fill="#dc2626"/><text x="8" y="17.600" text-anchor="middle" font-family="Liberation Sans, sans-serif" font-weight="700" font-size="3.800" fill="#fff">pdf</text></svg></span><span class="c-name"><span style="letter-spacing:0.34px">DN - Annual Statement 20<i class="o">1</i>9.pdf</span></span><span class="c-date"><span style="letter-spacing:1.33px">2025-<i class="o">1</i>2-02</span></span><span class="c-size"><span style="letter-spacing:0.43px">760 KB</span></span><span class="c-star"><svg width="17" height="17" viewBox="0 0 24 24" fill="none" stroke="currentColor" stroke-width="2" stroke-linecap="round" stroke-linejoin="round" ><path d="M8.340 8.340 2 9.270l5 4.870L5.820 21 12 17.770 18.180 21l-.590-3.430"/><path d="M18.420 12.760 22 9.270l-6.910-1L12 2l-1.440 2.910"/><line x1="2" x2="22" y1="2" y2="22"/></svg></span><span class="c-q"><svg width="16" height="16" viewBox="0 0 24 24" fill="none" stroke="currentColor" stroke-width="2" stroke-linecap="round" stroke-linejoin="round" ><path d="M12 17h.01"/><path d="M15 2H6a2 2 0 0 0-2 2v16a2 2 0 0 0 2 2h12a2 2 0 0 0 2-2V7z"/><path d="M9.100 9a3 3 0 0 1 5.820 1c0 2-3 3-3 3"/></svg></span><span class="dot d1">0</span><span class="dot d2">0</span><span class="dot d3">0</span></div>
<div class="row" style="top:294px"><span class="cb"></span><span class="c-idx"><span style="letter-spacing:-0.52px"><i class="o">1</i>.<i class="o">1</i>.7</span></span><span class="c-pdf"><svg class="pdf" width="16" height="19" viewBox="0 0 16 19"><path d="M0 1.500 a1.500 1.500 0 0 1 1.500-1.500 h10.200 l4.300 4.300 v9.700 h-16z" fill="#f4f4f3"/><path d="M11.700 0 l4.300 4.300 h-3.500 a.8.8 0 0 1-.8-.8z" fill="#d6d5d3"/><path d="M5.200 9.800 c1.800-1.500 2.600-3.400 2.600-4.800 c0-.8-.9-.8-.9 0 c0 1.800 1.700 3.900 3.900 4.100 c.8.100.8-.700 0-.700 c-1.800 0-4.300.600-5.600 1.400z" fill="none" stroke="#d9d6d2" stroke-width=".7"/><path d="M0 13.500 h16 v4 a1.500 1.500 0 0 1-1.500 1.500 h-13 a1.500 1.500 0 0 1-1.500-1.500z" fill="#dc2626"/><text x="8" y="17.600" text-anchor="middle" font-family="Liberation Sans, sans-serif" font-weight="700" font-size="3.800" fill="#fff">pdf</text></svg></span><span class="c-name"><span style="letter-spacing:0.38px">DN - Annual Statement 2020.pdf</span></span><span class="c-date"><span style="letter-spacing:1.33px">2025-<i class="o">1</i>2-02</span></span><span class="c-size"><span style="letter-spacing:0.31px">765 KB</span></span><span class="c-star"><svg width="17" height="17" viewBox="0 0 24 24" fill="none" stroke="currentColor" stroke-width="2" stroke-linecap="round" stroke-linejoin="round" ><path d="M8.340 8.340 2 9.270l5 4.870L5.820 21 12 17.770 18.180 21l-.590-3.430"/><path d="M18.420 12.760 22 9.270l-6.910-1L12 2l-1.440 2.910"/><line x1="2" x2="22" y1="2" y2="22"/></svg></span><span class="c-q"><svg width="16" height="16" viewBox="0 0 24 24" fill="none" stroke="currentColor" stroke-width="2" stroke-linecap="round" stroke-linejoin="round" ><path d="M12 17h.01"/><path d="M15 2H6a2 2 0 0 0-2 2v16a2 2 0 0 0 2 2h12a2 2 0 0 0 2-2V7z"/><path d="M9.100 9a3 3 0 0 1 5.820 1c0 2-3 3-3 3"/></svg></span><span class="dot d1">0</span><span class="dot d2">0</span><span class="dot d3">0</span></div>
<div class="row" style="top:335px"><span class="cb"></span><span class="c-idx"><span style="letter-spacing:0.02px"><i class="o">1</i>.<i class="o">1</i>.8</span></span><span class="c-pdf"><svg class="pdf" width="16" height="19" viewBox="0 0 16 19"><path d="M0 1.500 a1.500 1.500 0 0 1 1.500-1.500 h10.200 l4.300 4.300 v9.700 h-16z" fill="#f4f4f3"/><path d="M11.700 0 l4.300 4.300 h-3.500 a.8.8 0 0 1-.8-.8z" fill="#d6d5d3"/><path d="M5.200 9.800 c1.800-1.500 2.600-3.400 2.600-4.800 c0-.8-.9-.8-.9 0 c0 1.800 1.700 3.900 3.900 4.100 c.8.100.8-.700 0-.700 c-1.800 0-4.300.600-5.600 1.400z" fill="none" stroke="#d9d6d2" stroke-width=".7"/><path d="M0 13.500 h16 v4 a1.500 1.500 0 0 1-1.500 1.500 h-13 a1.500 1.500 0 0 1-1.500-1.500z" fill="#dc2626"/><text x="8" y="17.600" text-anchor="middle" font-family="Liberation Sans, sans-serif" font-weight="700" font-size="3.800" fill="#fff">pdf</text></svg></span><span class="c-name"><span style="letter-spacing:0.34px">DN - Annual Statement 202<i class="o">1</i>.pdf</span></span><span class="c-date"><span style="letter-spacing:1.33px">2025-<i class="o">1</i>2-02</span></span><span class="c-size"><span style="letter-spacing:0.31px">874 KB</span></span><span class="c-star"><svg width="17" height="17" viewBox="0 0 24 24" fill="none" stroke="currentColor" stroke-width="2" stroke-linecap="round" stroke-linejoin="round" ><path d="M8.340 8.340 2 9.270l5 4.870L5.820 21 12 17.770 18.180 21l-.590-3.430"/><path d="M18.420 12.760 22 9.270l-6.910-1L12 2l-1.440 2.910"/><line x1="2" x2="22" y1="2" y2="22"/></svg></span><span class="c-q"><svg width="16" height="16" viewBox="0 0 24 24" fill="none" stroke="currentColor" stroke-width="2" stroke-linecap="round" stroke-linejoin="round" ><path d="M12 17h.01"/><path d="M15 2H6a2 2 0 0 0-2 2v16a2 2 0 0 0 2 2h12a2 2 0 0 0 2-2V7z"/><path d="M9.100 9a3 3 0 0 1 5.820 1c0 2-3 3-3 3"/></svg></span><span class="dot d1">0</span><span class="dot d2">0</span><span class="dot d3">0</span></div>
<div class="row" style="top:376px"><span class="cb"></span><span class="c-idx"><span style="letter-spacing:0.02px"><i class="o">1</i>.<i class="o">1</i>.9</span></span><span class="c-pdf"><svg class="pdf" width="16" height="19" viewBox="0 0 16 19"><path d="M0 1.500 a1.500 1.500 0 0 1 1.500-1.500 h10.200 l4.300 4.300 v9.700 h-16z" fill="#f4f4f3"/><path d="M11.700 0 l4.300 4.300 h-3.500 a.8.8 0 0 1-.8-.8z" fill="#d6d5d3"/><path d="M5.200 9.800 c1.800-1.500 2.600-3.400 2.600-4.800 c0-.8-.9-.8-.9 0 c0 1.800 1.700 3.900 3.900 4.100 c.8.100.8-.700 0-.700 c-1.800 0-4.300.600-5.600 1.400z" fill="none" stroke="#d9d6d2" stroke-width=".7"/><path d="M0 13.500 h16 v4 a1.500 1.500 0 0 1-1.500 1.500 h-13 a1.500 1.500 0 0 1-1.500-1.500z" fill="#dc2626"/><text x="8" y="17.600" text-anchor="middle" font-family="Liberation Sans, sans-serif" font-weight="700" font-size="3.800" fill="#fff">pdf</text></svg></span><span class="c-name"><span style="letter-spacing:0.36px">DN - Annual Statement 2022.pdf</span></span><span class="c-date"><span style="letter-spacing:1.33px">2025-<i class="o">1</i>2-02</span></span><span class="c-size"><span style="letter-spacing:0.48px"><i class="o">1</i> MB</span></span><span class="c-star"><svg width="17" height="17" viewBox="0 0 24 24" fill="none" stroke="currentColor" stroke-width="2" stroke-linecap="round" stroke-linejoin="round" ><path d="M8.340 8.340 2 9.270l5 4.870L5.820 21 12 17.770 18.180 21l-.590-3.430"/><path d="M18.420 12.760 22 9.270l-6.910-1L12 2l-1.440 2.910"/><line x1="2" x2="22" y1="2" y2="22"/></svg></span><span class="c-q"><svg width="16" height="16" viewBox="0 0 24 24" fill="none" stroke="currentColor" stroke-width="2" stroke-linecap="round" stroke-linejoin="round" ><path d="M12 17h.01"/><path d="M15 2H6a2 2 0 0 0-2 2v16a2 2 0 0 0 2 2h12a2 2 0 0 0 2-2V7z"/><path d="M9.100 9a3 3 0 0 1 5.820 1c0 2-3 3-3 3"/></svg></span><span class="dot d1">0</span><span class="dot d2">0</span><span class="dot d3">0</span></div>
<div class="row" style="top:417px"><span class="cb"></span><span class="c-idx"><span style="letter-spacing:0.59px"><i class="o">1</i>.<i class="o">1</i>.<i class="o">1</i>0</span></span><span class="c-pdf"><svg class="pdf" width="16" height="19" viewBox="0 0 16 19"><path d="M0 1.500 a1.500 1.500 0 0 1 1.500-1.500 h10.200 l4.300 4.300 v9.700 h-16z" fill="#f4f4f3"/><path d="M11.700 0 l4.300 4.300 h-3.500 a.8.8 0 0 1-.8-.8z" fill="#d6d5d3"/><path d="M5.200 9.800 c1.800-1.500 2.600-3.400 2.600-4.800 c0-.8-.9-.8-.9 0 c0 1.800 1.700 3.900 3.900 4.100 c.8.100.8-.700 0-.700 c-1.800 0-4.300.600-5.600 1.400z" fill="none" stroke="#d9d6d2" stroke-width=".7"/><path d="M0 13.500 h16 v4 a1.500 1.500 0 0 1-1.500 1.500 h-13 a1.500 1.500 0 0 1-1.500-1.500z" fill="#dc2626"/><text x="8" y="17.600" text-anchor="middle" font-family="Liberation Sans, sans-serif" font-weight="700" font-size="3.800" fill="#fff">pdf</text></svg></span><span class="c-name"><span style="letter-spacing:0.34px">DN - Annual Statement 2023.pdf</span></span><span class="c-date"><span style="letter-spacing:1.33px">2025-<i class="o">1</i>2-02</span></span><span class="c-size"><span style="letter-spacing:0.48px"><i class="o">1</i> MB</span></span><span class="c-star"><svg width="17" height="17" viewBox="0 0 24 24" fill="none" stroke="currentColor" stroke-width="2" stroke-linecap="round" stroke-linejoin="round" ><path d="M8.340 8.340 2 9.270l5 4.870L5.820 21 12 17.770 18.180 21l-.590-3.430"/><path d="M18.420 12.760 22 9.270l-6.910-1L12 2l-1.440 2.910"/><line x1="2" x2="22" y1="2" y2="22"/></svg></span><span class="c-q"><svg width="16" height="16" viewBox="0 0 24 24" fill="none" stroke="currentColor" stroke-width="2" stroke-linecap="round" stroke-linejoin="round" ><path d="M12 17h.01"/><path d="M15 2H6a2 2 0 0 0-2 2v16a2 2 0 0 0 2 2h12a2 2 0 0 0 2-2V7z"/><path d="M9.100 9a3 3 0 0 1 5.820 1c0 2-3 3-3 3"/></svg></span><span class="dot d1">0</span><span class="dot d2">0</span><span class="dot d3">0</span></div>
<div class="row" style="top:458px"><span class="cb"></span><span class="c-idx"><span style="letter-spacing:-0.08px"><i class="o">1</i>.<i class="o">1</i>.<i class="o">1</i><i class="o">1</i></span></span><span class="c-pdf"><svg class="pdf" width="16" height="19" viewBox="0 0 16 19"><path d="M0 1.500 a1.500 1.500 0 0 1 1.500-1.500 h10.200 l4.300 4.300 v9.700 h-16z" fill="#f4f4f3"/><path d="M11.700 0 l4.300 4.300 h-3.500 a.8.8 0 0 1-.8-.8z" fill="#d6d5d3"/><path d="M5.200 9.800 c1.800-1.500 2.600-3.400 2.600-4.800 c0-.8-.9-.8-.9 0 c0 1.800 1.700 3.900 3.900 4.100 c.8.100.8-.700 0-.700 c-1.800 0-4.300.600-5.600 1.400z" fill="none" stroke="#d9d6d2" stroke-width=".7"/><path d="M0 13.500 h16 v4 a1.500 1.500 0 0 1-1.500 1.500 h-13 a1.500 1.500 0 0 1-1.500-1.500z" fill="#dc2626"/><text x="8" y="17.600" text-anchor="middle" font-family="Liberation Sans, sans-serif" font-weight="700" font-size="3.800" fill="#fff">pdf</text></svg></span><span class="c-name"><span style="letter-spacing:0.36px">DN - Annual Statement 2024.pdf</span></span><span class="c-date"><span style="letter-spacing:1.33px">2025-<i class="o">1</i>2-02</span></span><span class="c-size"><span style="letter-spacing:0.43px">692 KB</span></span><span class="c-star"><svg width="17" height="17" viewBox="0 0 24 24" fill="none" stroke="currentColor" stroke-width="2" stroke-linecap="round" stroke-linejoin="round" ><path d="M8.340 8.340 2 9.270l5 4.870L5.820 21 12 17.770 18.180 21l-.590-3.430"/><path d="M18.420 12.760 22 9.270l-6.910-1L12 2l-1.440 2.910"/><line x1="2" x2="22" y1="2" y2="22"/></svg></span><span class="c-q"><svg width="16" height="16" viewBox="0 0 24 24" fill="none" stroke="currentColor" stroke-width="2" stroke-linecap="round" stroke-linejoin="round" ><path d="M12 17h.01"/><path d="M15 2H6a2 2 0 0 0-2 2v16a2 2 0 0 0 2 2h12a2 2 0 0 0 2-2V7z"/><path d="M9.100 9a3 3 0 0 1 5.820 1c0 2-3 3-3 3"/></svg></span><span class="dot d1">0</span><span class="dot d2">0</span><span class="dot d3">0</span></div>
    </div>
  </div>
</div>

</body></html>
